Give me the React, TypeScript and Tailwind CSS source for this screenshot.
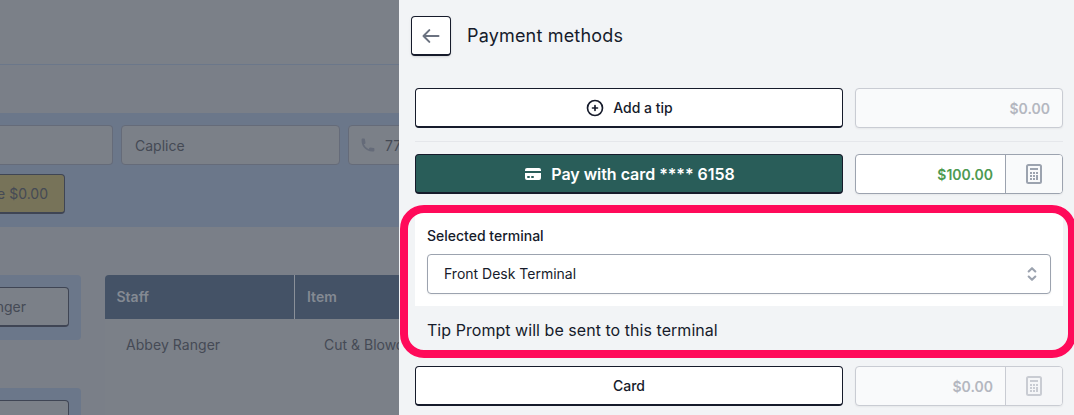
import React from "react";

function Calculator({ className }: { className: string }) {
  return (
    <svg className={className} width="16" height="20" viewBox="0 0 16 20" fill="none">
      <rect x="1" y="1" width="14" height="18" rx="1.5" stroke="currentColor" strokeWidth="2" />
      <path
        fill="currentColor"
        d="M4 4h8v2H4zM4 8h2v2H4zM7 8h2v2H7zM10 8h2v2h-2zM4 11h2v2H4zM7 11h2v2H7zM10 11h2v5h-2zM4 14h2v2H4zM7 14h2v2H7z"
      />
    </svg>
  );
}

function StaffCard({ name }: { name: string }) {
  return (
    <div className="h-[65px] w-[81px] rounded-r-[4px] bg-[#6b778a] pt-3">
      <div className="flex h-10 w-[69px] items-center justify-end rounded-r-[4px] border border-b-2 border-l-0 border-[#3f4554] bg-[#7b8088] pr-[42px] text-sm text-[#454a55]">
        <span className="whitespace-nowrap">{name}</span>
      </div>
    </div>
  );
}

function Background() {
  return (
    <div className="flex w-[399px] shrink-0 flex-col overflow-hidden bg-[#7a7f88] text-sm text-[#454a55]">
      <div className="h-[65px] shrink-0 border-b border-[#6b778a] bg-[#7b8088]" />
      <div className="h-12 shrink-0" />
      <div className="flex h-[114px] shrink-0 flex-col gap-[9px] bg-[#6b778a] pt-3">
        <div className="flex gap-2">
          <div className="h-10 w-[113px] shrink-0 rounded-r-[4px] border border-l-0 border-[#656b79] bg-[#7b8088]" />
          <div className="flex h-10 w-[219px] shrink-0 items-center rounded-[4px] border border-[#656b79] bg-[#7b8088] px-[13px] pt-0.5">
            Caplice
          </div>
          <div className="flex h-10 w-[200px] shrink-0 items-center rounded-[4px] border border-[#656b79] bg-[#7b8088] pl-[11px]">
            <svg className="mb-px mr-[9px] size-4 text-[#656b79]" viewBox="0 0 20 20" fill="currentColor">
              <path d="M2 3a1 1 0 011-1h2.153a1 1 0 01.986.836l.74 4.435a1 1 0 01-.54 1.06l-1.548.773a11.037 11.037 0 006.105 6.105l.774-1.548a1 1 0 011.059-.54l4.435.74a1 1 0 01.836.986V17a1 1 0 01-1 1h-2C7.82 18 2 12.18 2 5V3z" />
            </svg>
            <span className="pt-0.5">7700</span>
          </div>
        </div>
        <div className="flex h-10 w-[65px] items-center justify-end rounded-r-[4px] border border-b-2 border-l-0 border-[#3f4554] bg-[#777359] pr-4">
          <span className="whitespace-nowrap">Balance $0.00</span>
        </div>
      </div>
      <div className="flex gap-6 pt-12">
        <div className="flex shrink-0 flex-col gap-12">
          <StaffCard name="Abbey Ranger" />
          <StaffCard name="" />
        </div>
        <div className="h-[160px] w-[400px] shrink-0 rounded-t-[4px] bg-[#7b8088]">
          <div className="flex h-11 overflow-hidden rounded-tl-[4px] bg-[#445266] font-semibold text-[#848a93]">
            <div className="flex w-[190px] items-center border-r border-[#8a9099] px-[11.5px]">Staff</div>
            <div className="flex items-center px-3">Item</div>
          </div>
          <div className="flex h-[52px] items-center">
            <div className="w-[198px] pl-[21px] tracking-[0.05px]">Abbey Ranger</div>
            <div className="pl-[21px]">Cut &amp; Blowdry</div>
          </div>
        </div>
      </div>
    </div>
  );
}

export default function App() {
  return (
    <div className="relative flex h-[415px] w-[1074px] overflow-hidden bg-[#f2f4f6] font-['Inter',sans-serif] text-[#161b2b]">
      <Background />
      <main className="flex grow flex-col pl-3 pr-[11px] pt-4">
        <header className="flex h-10 items-center gap-4">
          <button className="flex size-10 items-center justify-center rounded-[4px] border border-b-2 border-[#161b2b] bg-white shadow-sm">
            <svg className="size-5 text-[#6b7280]" viewBox="0 0 24 24" fill="none" stroke="currentColor" strokeWidth="2.4" strokeLinecap="round" strokeLinejoin="round">
              <path d="M10 19l-7-7m0 0l7-7m-7 7h18" />
            </svg>
          </button>
          <h1 className="text-lg tracking-[0.18px]">Payment methods</h1>
        </header>

        <div className="mt-8 flex gap-3 pl-1">
          <button className="flex h-10 w-[428px] items-center justify-center gap-2 rounded-[4px] border border-b-2 border-[#161b2b] bg-white text-sm font-medium">
            <svg className="size-5" viewBox="0 0 24 24" fill="none" stroke="currentColor" strokeWidth="2" strokeLinecap="round" strokeLinejoin="round">
              <path d="M12 9v3m0 0v3m0-3h3m-3 0H9m12 0a9 9 0 11-18 0 9 9 0 0118 0z" />
            </svg>
            Add a tip
          </button>
          <div className="flex h-10 w-52 items-center justify-end rounded-[4px] border border-[#c9ccd3] bg-[#f9fafb] pr-3 pt-0.5 text-sm font-semibold text-[#b4b7c0] shadow-xs">
            $0.00
          </div>
        </div>

        <div className="ml-1 mt-[13px] h-px bg-[#e5e7eb]" />

        <div className="mt-3 flex gap-3 pl-1">
          <button className="flex h-10 w-[428px] items-center justify-center gap-2 rounded-[4px] border border-b-2 border-[#161b2b] bg-[#295d59] text-base font-semibold tracking-[-0.03px] text-white">
            <svg className="size-5" viewBox="0 0 20 20" fill="currentColor">
              <path d="M4 4a2 2 0 00-2 2v1h16V6a2 2 0 00-2-2H4z" />
              <path fillRule="evenodd" d="M18 9H2v5a2 2 0 002 2h12a2 2 0 002-2V9zM4 13a1 1 0 011-1h1a1 1 0 110 2H5a1 1 0 01-1-1zm5-1a1 1 0 100 2h1a1 1 0 100-2H9z" />
            </svg>
            Pay with card **** 6158
          </button>
          <div className="flex h-10 w-52 overflow-hidden rounded-[4px] border border-[#9ca3af] bg-white text-sm font-semibold text-[#4d9a51] shadow-xs">
            <div className="flex grow items-center justify-end pr-3 pt-0.5">$100.00</div>
            <div className="flex w-[57px] items-center justify-center border-l border-[#9ca3af] bg-[#f9fafb]">
              <Calculator className="text-[#9ca3af]" />
            </div>
          </div>
        </div>

        <section className="ml-1 mt-3 h-[100px] bg-white px-3 pt-5">
          <div className="text-sm font-medium leading-5">Selected terminal</div>
          <div className="mt-2 flex h-10 items-center justify-between rounded-[4px] border border-[#9ca3af] bg-white pl-4 pr-2 text-sm shadow-xs">
            Front Desk Terminal
            <svg className="size-5 text-[#9ca3af]" viewBox="0 0 24 24" fill="none" stroke="currentColor" strokeWidth="2.5" strokeLinecap="round" strokeLinejoin="round">
              <path d="M8 9l4-4 4 4m0 6l-4 4-4-4" />
            </svg>
          </div>
        </section>
        <p className="mt-3 pl-4 text-base tracking-[0.045px]">Tip Prompt will be sent to this terminal</p>

        <div className="mt-6 flex gap-3 pl-1">
          <button className="flex h-10 w-[428px] items-center justify-center rounded-[4px] border border-b-2 border-[#161b2b] bg-white text-sm font-medium">
            Card
          </button>
          <div className="flex h-10 w-52 overflow-hidden rounded-[4px] border border-[#c9ccd3] bg-[#f9fafb] text-sm font-semibold text-[#b4b7c0] shadow-xs">
            <div className="flex grow items-center justify-end pr-3 pt-0.5">$0.00</div>
            <div className="flex w-[57px] items-center justify-center border-l border-[#c9ccd3] bg-[#f5f6f8]">
              <Calculator className="text-[#c9ccd3]" />
            </div>
          </div>
        </div>
      </main>
      <div className="pointer-events-none absolute left-[400px] top-[205px] h-[153px] w-[676px] rounded-[24px] border-8 border-[#ff0a5a]" />
    </div>
  );
}
